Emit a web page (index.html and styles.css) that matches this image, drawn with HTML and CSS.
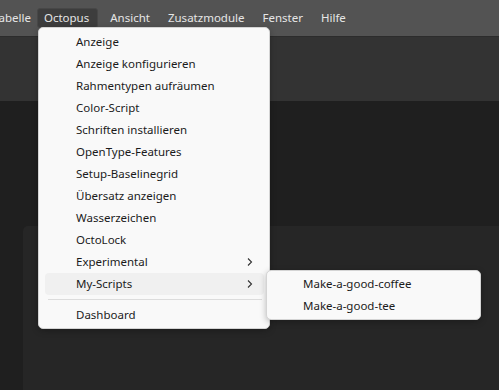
FILE: index.html
```html
<!DOCTYPE html>
<html lang="de">
<head>
    <meta charset="UTF-8">
    <meta name="viewport" content="width=device-width, initial-scale=1.0">
    <title>Octopus Menü</title>
    <link rel="stylesheet" href="styles.css">
</head>
<body>
    <div class="menubar">
        <span class="menubar-item cut">Tabelle</span>
        <span class="menubar-item active">Octopus</span>
        <span class="menubar-item">Ansicht</span>
        <span class="menubar-item">Zusatzmodule</span>
        <span class="menubar-item">Fenster</span>
        <span class="menubar-item">Hilfe</span>
    </div>
    <div class="toolbar"></div>
    <div class="workspace">
        <div class="panel"></div>
    </div>

    <!-- Octopus dropdown -->
    <div class="dropdown">
        <div class="menu-item">Anzeige</div>
        <div class="menu-item">Anzeige konfigurieren</div>
        <div class="menu-item">Rahmentypen aufräumen</div>
        <div class="menu-item">Color-Script</div>
        <div class="menu-item">Schriften installieren</div>
        <div class="menu-item">OpenType-Features</div>
        <div class="menu-item">Setup-Baselinegrid</div>
        <div class="menu-item">Übersatz anzeigen</div>
        <div class="menu-item">Wasserzeichen</div>
        <div class="menu-item">OctoLock</div>
        <div class="menu-item has-sub">Experimental
            <svg class="chevron" width="6" height="10" viewBox="0 0 6 10"><path d="M1 1.5 L4.5 5 L1 8.5" fill="none" stroke="#333" stroke-width="1.1"/></svg>
        </div>
        <div class="menu-item has-sub hover">My-Scripts
            <svg class="chevron" width="6" height="10" viewBox="0 0 6 10"><path d="M1 1.5 L4.5 5 L1 8.5" fill="none" stroke="#333" stroke-width="1.1"/></svg>
            <div class="submenu">
                <div class="menu-item">Make-a-good-coffee</div>
                <div class="menu-item">Make-a-good-tee</div>
            </div>
        </div>
        <div class="separator"></div>
        <div class="menu-item">Dashboard</div>
    </div>
</body>
</html>
```

FILE: styles.css
```css
html, body {
    margin: 0;
    height: 100%;
}
body {
    background-color: #1f1f1f;
    font-family: "Noto Sans", "Open Sans", sans-serif;
    overflow: hidden;
    position: relative;
}
.menubar {
    height: 36px;
    background-color: #535353;
    border-bottom: 1px solid #2c2c2c;
    display: flex;
    align-items: center;
    font-size: 11.5px;
    color: #e6e6e6;
}
.menubar-item {
    padding: 1px 8px 2px;
    border: 1px solid transparent;
    border-radius: 3px;
}
.menubar-item.cut {
    margin-left: -16px;
    padding-right: 5px;
}
.menubar-item.active {
    background-color: #3d3d3d;
    border-color: #474747;
    padding: 1px 8px 2px 6px;
    margin-right: 3px;
}
.toolbar {
    height: 64px;
    background-color: #333333;
}
.workspace {
    margin-top: 125px;
    padding-left: 23px;
}
.panel {
    height: 170px;
    background-color: #262626;
    border-top-left-radius: 5px;
}
.dropdown {
    position: absolute;
    left: 38px;
    top: 27px;
    width: 232px;
    box-sizing: border-box;
    padding: 3px 5px 2px 6px;
    background-color: #f9f9f9;
    border: 1px solid #d4d4d4;
    border-radius: 5px;
    box-shadow: 0 2px 6px rgba(0,0,0,0.25);
    font-size: 11.5px;
    color: #1b1b1b;
}
.menu-item {
    height: 22px;
    line-height: 21px;
    padding-left: 31px;
    border-radius: 4px;
    position: relative;
}
.menu-item.hover {
    background-color: #f0f0f0;
}
.chevron {
    position: absolute;
    right: 11px;
    top: 6px;
}
.separator {
    height: 1px;
    background-color: #dcdcdc;
    margin: 4px 2px 4px 3px;
}
.submenu {
    position: absolute;
    left: 221px;
    top: -3px;
    width: 215px;
    box-sizing: border-box;
    padding: 2px 0;
    background-color: #f9f9f9;
    border: 1px solid #d4d4d4;
    border-radius: 5px;
    box-shadow: 0 2px 6px rgba(0,0,0,0.25);
}
.submenu .menu-item {
    padding-left: 36px;
}
```
